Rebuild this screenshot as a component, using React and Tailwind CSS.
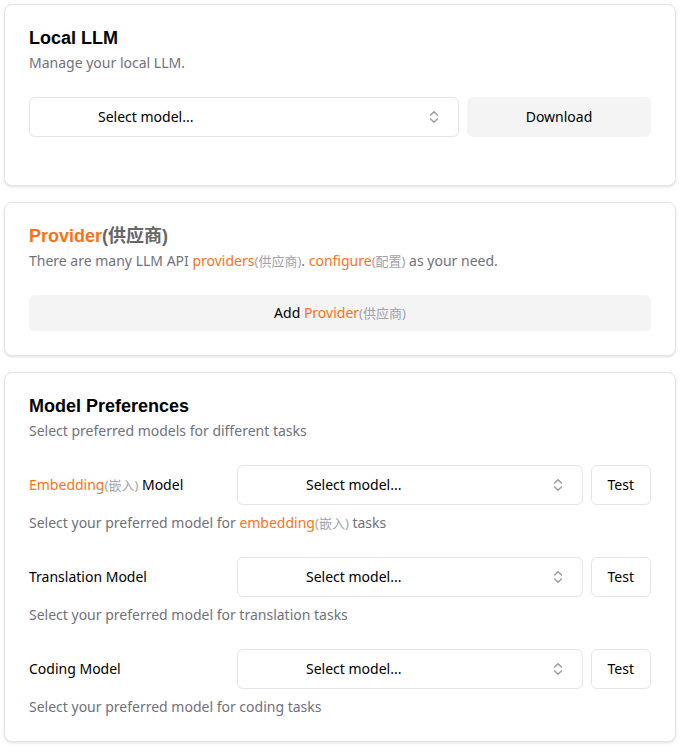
import { ChevronsUpDown } from "lucide-react";

const font = "font-['Noto_Sans','Noto_Sans_CJK_SC',sans-serif]";

function Card({ children, className = "" }) {
  return (
    <div className={`rounded-lg border border-[#e5e5e5] bg-white shadow-sm ${className}`}>
      {children}
    </div>
  );
}

function CardHeader({ title, description }) {
  return (
    <div className="flex flex-col gap-1.5 p-6">
      <h3 className="font-['Liberation_Sans','Noto_Sans_CJK_SC',sans-serif] text-lg font-bold leading-none text-black">
        {title}
      </h3>
      <p className="text-sm leading-5 text-[#71717a]">{description}</p>
    </div>
  );
}

// small gray chinese hint after a term
function Zh({ children, className = "" }) {
  return <span className={`text-[13px] leading-none text-[#a1a1aa] ${className}`}>({children})</span>;
}

function ModelSelect({ className = "" }) {
  return (
    <button
      className={`flex h-10 items-center justify-between rounded-md border border-[#e5e5e5] bg-white pl-[68px] pr-4 text-sm text-black ${className}`}
    >
      <span>Select model...</span>
      <ChevronsUpDown className="h-4 w-4 shrink-0 opacity-40" />
    </button>
  );
}

function PreferenceRow({ label, help }) {
  return (
    <div className="flex flex-col gap-2">
      <div className="flex items-center">
        <div className="w-[208px] shrink-0 text-sm text-black">{label}</div>
        <div className="flex flex-1 gap-2">
          <ModelSelect className="flex-1" />
          <button className="h-10 rounded-md border border-[#e5e5e5] bg-white px-4 text-sm text-black">
            Test
          </button>
        </div>
      </div>
      <p className="text-sm leading-5 text-[#71717a]">{help}</p>
    </div>
  );
}

export default function App() {
  return (
    <div className={`flex flex-col gap-4 bg-white py-1 pl-1 pr-2 ${font}`}>
      {/* Local LLM */}
      <Card>
        <CardHeader title="Local LLM" description="Manage your local LLM." />
        <div className="flex gap-2 px-6 pb-12">
          <ModelSelect className="flex-1" />
          <button className="h-10 w-[184px] rounded-md bg-[#f4f4f5] text-sm text-black">
            Download
          </button>
        </div>
      </Card>

      {/* Providers */}
      <Card>
        <CardHeader
          title={
            <>
              <span className="text-[#f97316]">Provider</span>
              <span className="text-[#666]">(供应商)</span>
            </>
          }
          description={
            <>
              There are many LLM API <span className="text-[#f97316]">providers</span>
              <Zh>供应商</Zh>. <span className="text-[#f97316]">configure</span>
              <Zh>配置</Zh> as your need.
            </>
          }
        />
        <div className="px-6 pb-6">
          <button className="h-9 w-full rounded-md bg-[#f4f4f5] text-sm text-black">
            Add <span className="text-[#f97316]">Provider</span>
            <Zh className="text-[#71717a]">供应商</Zh>
          </button>
        </div>
      </Card>

      {/* Model preferences */}
      <Card>
        <CardHeader title="Model Preferences" description="Select preferred models for different tasks" />
        <div className="flex flex-col gap-6 px-6 pb-6">
          <PreferenceRow
            label={
              <>
                <span className="text-[#f97316]">Embedding</span>
                <Zh className="text-[#71717a]">嵌入</Zh> Model
              </>
            }
            help={
              <>
                Select your preferred model for <span className="text-[#f97316]">embedding</span>
                <Zh>嵌入</Zh> tasks
              </>
            }
          />
          <PreferenceRow label="Translation Model" help="Select your preferred model for translation tasks" />
          <PreferenceRow label="Coding Model" help="Select your preferred model for coding tasks" />
        </div>
      </Card>
    </div>
  );
}
